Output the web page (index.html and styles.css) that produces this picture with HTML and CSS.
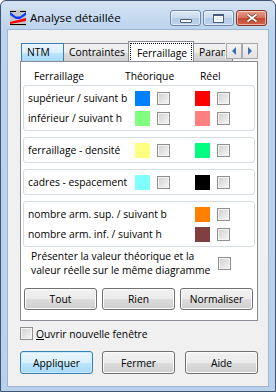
FILE: index.html
```html
<!DOCTYPE html>
<html lang="fr">
  <head>
    <meta charset="UTF-8" />
    <title>Analyse détaillée</title>
    <link rel="stylesheet" href="styles.css">
  </head>
  <body>
    <div class="window">
      <div class="titlebar">
        <svg class="app-icon" viewBox="0 0 16 16">
          <rect width="16" height="16" fill="#c6c6c6" />
          <path d="M0 1h6v1H0zM10 1h6v1h-6z" fill="#000" />
          <path d="M0 2L6 6.5h4L16 2v3L10 9H6L0 5z" fill="#0a3cff" />
          <path d="M0 12L16 8v3L0 14z" fill="#ff0000" />
          <path d="M0 14h16v1H0z" fill="#000" />
        </svg>
        <span class="title">Analyse détaillée</span>
        <div class="caption">
          <span class="cap-btn cap-min"><i></i></span>
          <span class="cap-btn cap-max"><i></i></span>
          <span class="cap-btn cap-close">
            <svg viewBox="0 0 12 10" width="12" height="10">
              <path d="M1.5 1.5l9 7M10.5 1.5l-9 7" stroke="#6b2a1f" stroke-width="3.4" />
              <path d="M1.5 1.5l9 7M10.5 1.5l-9 7" stroke="#fff" stroke-width="1.8" />
            </svg>
          </span>
        </div>
      </div>

      <div class="client">
        <div class="tabs">
          <span class="tab tab-hover tab-ntm">NTM</span>
          <span class="tab tab-constraints">Contraintes</span>
          <span class="tab tab-active"><span class="focus">Ferraillage</span></span>
          <span class="tab tab-last">Param</span>
          <div class="tab-scroll">
            <span class="scroll-btn"><i class="arrow-left"></i></span>
            <span class="scroll-btn"><i class="arrow-right"></i></span>
          </div>
        </div>

        <div class="panel">
          <div class="head">
            <span class="head-name">Ferraillage</span>
            <span class="head-theo">Théorique</span>
            <span>Réel</span>
          </div>

          <div class="group">
            <div class="row">
              <span class="label">supérieur / suivant b</span>
              <span class="swatch sw-blue"></span><span class="check"></span>
              <span class="swatch sw-red"></span><span class="check"></span>
            </div>
            <div class="row">
              <span class="label">inférieur / suivant h</span>
              <span class="swatch sw-lightgreen"></span><span class="check"></span>
              <span class="swatch sw-pink"></span><span class="check"></span>
            </div>
          </div>

          <div class="group">
            <div class="row">
              <span class="label">ferraillage - densité</span>
              <span class="swatch sw-yellow"></span><span class="check"></span>
              <span class="swatch sw-green"></span><span class="check"></span>
            </div>
          </div>

          <div class="group">
            <div class="row">
              <span class="label">cadres - espacement</span>
              <span class="swatch sw-cyan"></span><span class="check"></span>
              <span class="swatch sw-black"></span><span class="check"></span>
            </div>
          </div>

          <div class="group group-last">
            <div class="row row-wide">
              <span class="label">nombre arm. sup. / suivant b</span>
              <span class="swatch sw-orange"></span><span class="check"></span>
            </div>
            <div class="row row-wide">
              <span class="label">nombre arm. inf. / suivant h</span>
              <span class="swatch sw-brown"></span><span class="check"></span>
            </div>
          </div>

          <div class="same-chart">
            <span class="same-text">Présenter la valeur théorique et la<br>valeur réelle sur le même diagramme</span>
            <span class="check"></span>
          </div>

          <div class="panel-buttons">
            <button class="btn">Tout</button>
            <button class="btn">Rien</button>
            <button class="btn">Normaliser</button>
          </div>
        </div>

        <label class="new-window">
          <span class="check"></span>
          <span><u>O</u>uvrir nouvelle fenêtre</span>
        </label>

        <div class="dialog-buttons">
          <button class="btn btn-default">Appliquer</button>
          <button class="btn">Fermer</button>
          <button class="btn">Aide</button>
        </div>
      </div>
    </div>
  </body>
</html>
```

FILE: styles.css
```css
* {
  box-sizing: border-box;
}
body {
  margin: 0;
  font-family: "Open Sans", "Noto Sans", sans-serif;
  font-size: 10.3px;
  color: #000;
}
.window {
  width: 276px;
  height: 392px;
  border: 1px solid #3f5475;
  border-radius: 6px 6px 0 0;
  background: linear-gradient(#d3e2f3, #bcd3ec 30px, #b9d1ea);
  display: flex;
  flex-direction: column;
}
.titlebar {
  height: 29px;
  flex: none;
  display: flex;
  align-items: flex-start;
  padding: 9px 8px 0 9px;
}
.app-icon {
  width: 16px;
  height: 16px;
  flex: none;
}
.title {
  margin-left: 4px;
  font-size: 11.6px;
  line-height: 16px;
}
.caption {
  margin-left: auto;
  display: flex;
  gap: 2px;
}
.cap-btn {
  width: 31px;
  height: 16px;
  border: 1px solid #6e88aa;
  border-radius: 3px;
  background: linear-gradient(#dfeaf6, #c7d9ed 50%, #b4cbe6 50%, #bdd3ec);
  box-shadow: inset 0 0 0 1px rgba(255, 255, 255, 0.5);
  display: flex;
  align-items: center;
  justify-content: center;
}
.cap-min {
  align-items: flex-end;
  padding-bottom: 2px;
}
.cap-min i {
  width: 12px;
  height: 4px;
  border: 1px solid #4a5d78;
  border-radius: 1px;
  background: #fff;
}
.cap-max i {
  width: 11px;
  height: 9px;
  border: 1px solid #4a5d78;
  border-top-width: 2px;
  background: #e6eef8;
  box-shadow: inset 0 0 0 1px #fff;
}
.cap-close {
  border-color: #8a3424;
  background: linear-gradient(#e8a08d, #d6715a 50%, #c5472f 50%, #d0654c);
}
.client {
  margin: 0 7px;
  height: 356px;
  flex: none;
  background: #f0f0f0;
  padding: 11px 10px 0 12px;
  box-shadow: 0 0 0 1px #9db6d4;
}
.tabs {
  position: relative;
  height: 20px;
  display: flex;
  align-items: flex-end;
  padding-left: 1px;
  overflow: hidden;
}
.tab {
  flex: none;
  height: 18px;
  border: 1px solid #898c95;
  border-bottom: none;
  background: linear-gradient(#f3f3f3, #ebebeb 50%, #dddddd 50%, #cfcfcf);
  padding: 1px 0 0 5px;
  line-height: 15px;
  white-space: nowrap;
}
.tab + .tab {
  margin-left: -1px;
}
.tab-ntm {
  width: 43px;
}
.tab-constraints {
  width: 66px;
}
.tab-hover {
  border-color: #3c7fb1;
  background: linear-gradient(#eaf6fd, #d9f0fc 50%, #bee6fd 50%, #a7d9f5);
  position: relative;
  z-index: 1;
}
.tab-active {
  width: 66px;
  height: 21px;
  margin-bottom: -1px;
  background: #fff;
  position: relative;
  z-index: 2;
  padding: 1px 1px 0 1px;
}
.tab-active .focus {
  display: block;
  height: 19px;
  border: 1px dotted #000;
  border-bottom: none;
  padding: 2px 0 0 6px;
  line-height: 15px;
}
.tab-last {
  width: 40px;
  overflow: hidden;
}
.tab-scroll {
  position: absolute;
  right: 0;
  top: 2px;
  display: flex;
  background: #f0f0f0;
  padding-left: 1px;
}
.scroll-btn {
  width: 16px;
  height: 16px;
  border: 1px solid #a9a9a9;
  background: linear-gradient(#f4f4f4, #e2e2e2);
  display: flex;
  align-items: center;
  justify-content: center;
}
.arrow-left {
  border-right: 4px solid #3a6fb5;
  border-top: 4px solid transparent;
  border-bottom: 4px solid transparent;
}
.arrow-right {
  border-left: 4px solid #3a6fb5;
  border-top: 4px solid transparent;
  border-bottom: 4px solid transparent;
}
.panel {
  width: 238px;
  height: 260px;
  border: 1px solid #898c95;
  background: #fff;
  padding: 6px 2px 0 2px;
}
.head {
  display: flex;
  height: 16px;
  line-height: 16px;
  margin-bottom: 1px;
  padding-left: 11px;
}
.head-name {
  width: 91px;
}
.head-theo {
  width: 75px;
}
.group {
  width: 232px;
  border: 1px solid #d6dde3;
  border-radius: 3px;
  padding: 2px 0;
  margin-bottom: 6px;
}
.group-last {
  margin-bottom: 2px;
}
.row {
  display: grid;
  grid-template-columns: 107px 22px 38px 22px 13px;
  align-items: center;
  height: 20px;
  padding-left: 4px;
}
.row-wide {
  grid-template-columns: 167px 22px 13px;
}
.label {
  white-space: nowrap;
}
.swatch {
  width: 15px;
  height: 15px;
}
.sw-blue { background: #0080ff; }
.sw-red { background: #ff0000; }
.sw-lightgreen { background: #80ff80; }
.sw-pink { background: #ff8080; }
.sw-yellow { background: #ffff80; }
.sw-green { background: #00ff80; }
.sw-cyan { background: #80ffff; }
.sw-black { background: #000000; }
.sw-orange { background: #ff8000; }
.sw-brown { background: #804040; }
.check {
  display: inline-block;
  width: 13px;
  height: 13px;
  border: 1px solid #8f8f8f;
  background: linear-gradient(135deg, #cfcfcf, #f7f7f7);
  box-shadow: inset 0 0 0 1px #f4f4f4;
  flex: none;
}
.same-chart {
  display: flex;
  align-items: center;
  padding-left: 8px;
}
.same-text {
  width: 187px;
  line-height: 14px;
  white-space: nowrap;
}
.panel-buttons {
  display: flex;
  gap: 5px;
  margin-top: 11px;
  padding-left: 1px;
}
.btn {
  width: 73px;
  height: 22px;
  border: 1px solid #707070;
  border-radius: 3px;
  background: linear-gradient(#f2f2f2, #ebebeb 50%, #dddddd 50%, #cfcfcf);
  box-shadow: inset 0 0 0 1px #fcfcfc;
  font: inherit;
  color: #000;
  padding: 0;
}
.btn-default {
  border-color: #3c7fb1;
  background: linear-gradient(#eaf6fd, #d9f0fc 50%, #bee6fd 50%, #a7d9f5);
  box-shadow: inset 0 0 0 1px #c8ecfd;
}
.new-window {
  display: flex;
  align-items: center;
  gap: 3px;
  margin-top: 6px;
  height: 13px;
}
.dialog-buttons {
  display: flex;
  gap: 9px;
  margin-top: 11px;
}
.dialog-buttons .btn {
  height: 23px;
}
.dialog-buttons .btn + .btn + .btn {
  margin-left: 1px;
}
```
